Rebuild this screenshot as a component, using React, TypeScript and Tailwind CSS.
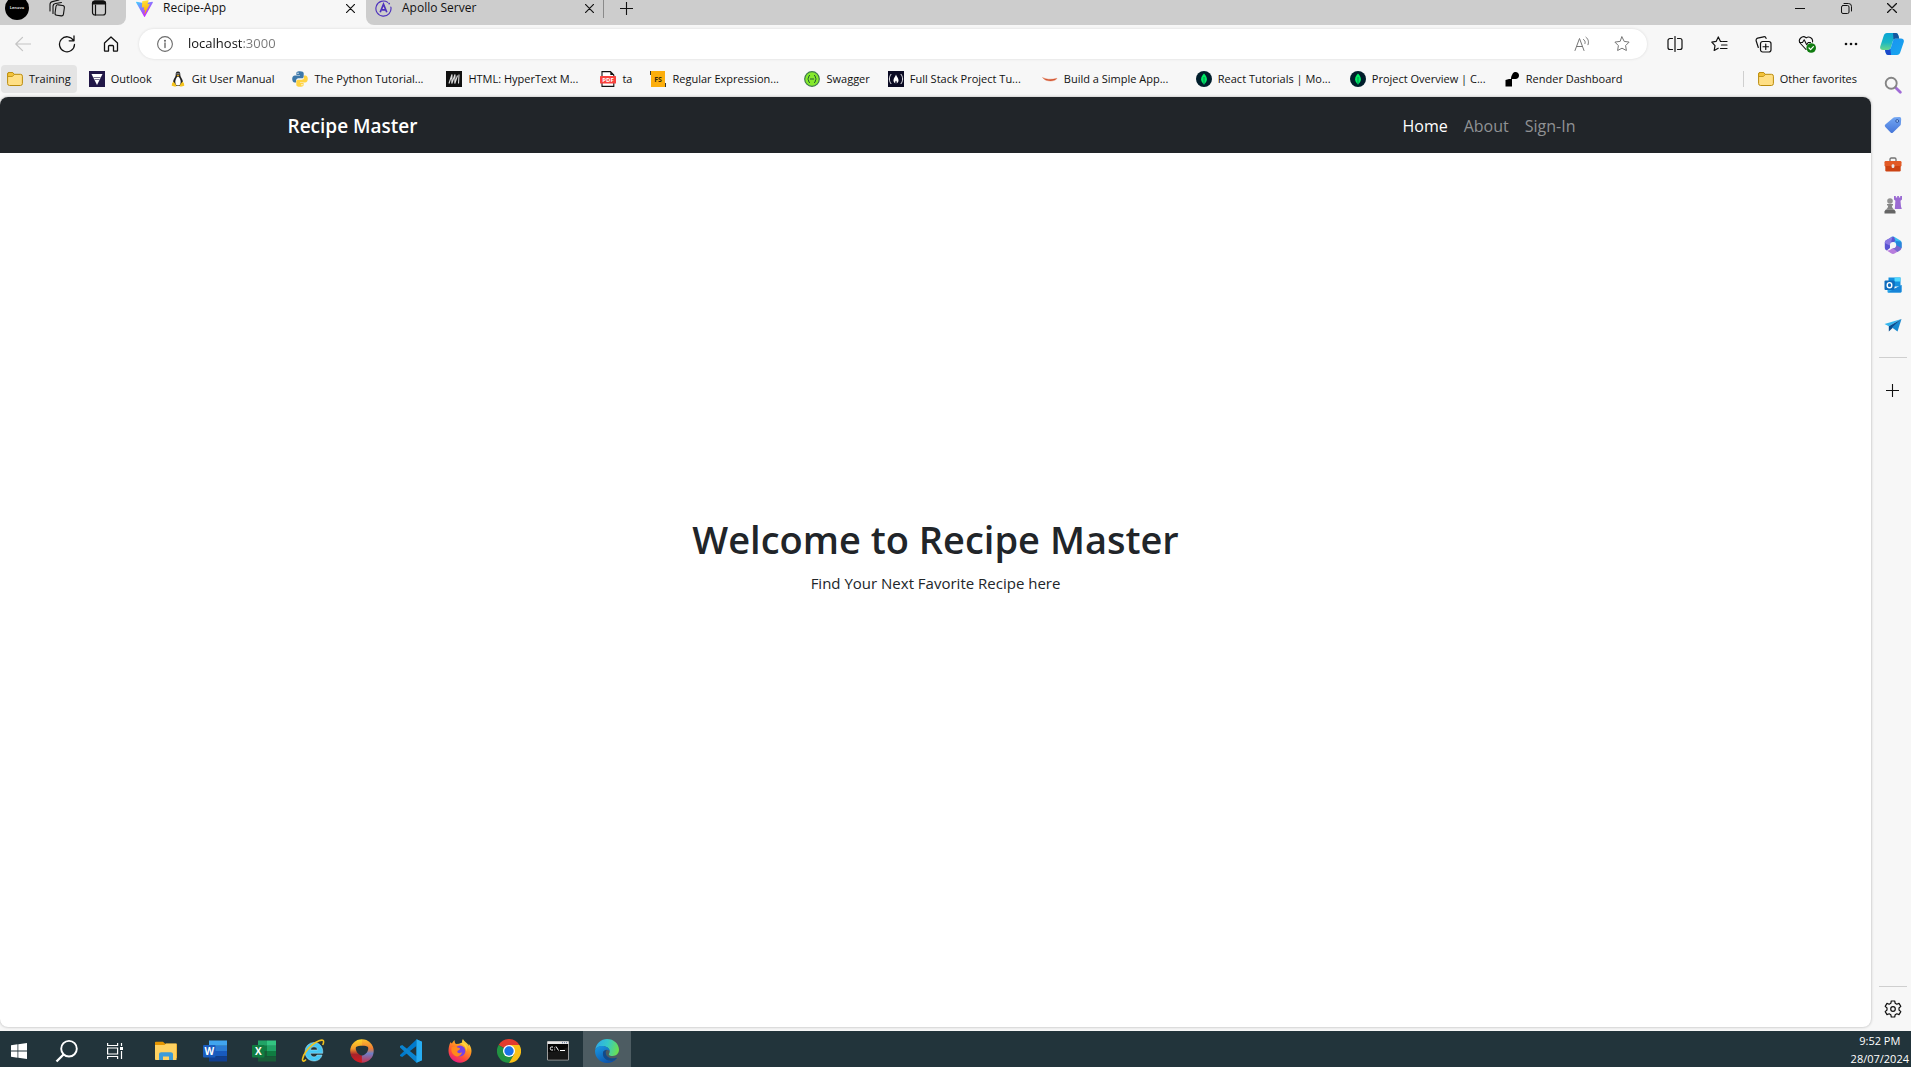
import React from "react";

type IconProps = { className?: string };
type Svg = (p: IconProps) => React.JSX.Element;

const line = {
  fill: "none",
  stroke: "currentColor",
  strokeLinecap: "round" as const,
  strokeLinejoin: "round" as const,
};

/* ---------- window and toolbar icons ---------- */

const Lenovo: Svg = () => (
  <svg viewBox="0 0 24 24" className="size-6">
    <circle cx="12" cy="12" r="12" fill="#000" />
    <text x="12" y="13" textAnchor="middle" fontSize="4" fontWeight="700" fill="#ddd" fontFamily="Open Sans, sans-serif">Lenovo</text>
  </svg>
);
const Workspaces: Svg = () => (
  <svg viewBox="0 0 18 18" className="size-[18px]" {...line} strokeWidth="1.100">
    <rect x="7.500" y="6" width="8.500" height="10.500" rx="2" transform="rotate(8 11 11)" />
    <path d="M5 14.500V7.500a3 3 0 0 1 2.500-3l6-1M2 12V5.500a3 3 0 0 1 2.300-2.900L11 1" />
  </svg>
);
const TabActions: Svg = () => (
  <svg viewBox="0 0 16 16" className="size-4" {...line} strokeWidth="1.200">
    <rect x="1.500" y="1" width="13" height="14" rx="2.500" />
    <path d="M1.500 3.500A2.500 2.500 0 0 1 4 1h8a2.500 2.500 0 0 1 2.500 2.500V4h-13z" fill="currentColor" />
    <path d="M4.500 5v10" />
  </svg>
);
const Vite: Svg = () => (
  <svg viewBox="0 0 256 257" className="size-[17px]">
    <defs>
      <linearGradient id="va" x1="0" y1="0" x2=".57" y2=".8"><stop stopColor="#41D1FF" /><stop offset="1" stopColor="#BD34FE" /></linearGradient>
      <linearGradient id="vb" x1=".43" y1=".02" x2=".5" y2=".9"><stop stopColor="#FFEA83" /><stop offset=".1" stopColor="#FFDD35" /><stop offset="1" stopColor="#FFA800" /></linearGradient>
    </defs>
    <path fill="url(#va)" d="M255 38 134 253c-2 4-9 5-11 0L1 38c-3-5 1-11 7-10l120 22 117-22c6-1 11 5 10 10z" />
    <path fill="url(#vb)" d="M185 0 97 17c-2 0-3 2-3 3l-5 92c0 2 2 4 5 3l24-5c2-1 5 1 4 4l-7 36c-1 2 1 5 4 4l15-5c2-1 5 2 4 4l-11 56c-1 4 4 5 6 3l74-147c1-3-1-5-4-5l-25 5c-3 0-5-2-4-4l17-57c0-2-2-5-6-4z" />
  </svg>
);
const Apollo: Svg = () => (
  <svg viewBox="0 0 18 18" className="size-[17px]" fill="none" stroke="#4b2fbd">
    <path d="M13.500 2.500A8 8 0 1 0 16.800 7.500" strokeWidth="1.200" strokeLinecap="round" />
    <circle cx="15" cy="3.800" r=".9" fill="#4b2fbd" stroke="none" />
    <path d="M5.500 13 9 4.500 12.500 13M7.500 10.500h3.500" strokeWidth="1.800" />
  </svg>
);
const Close: Svg = ({ className = "size-[9px]" }) => (
  <svg viewBox="0 0 10 10" className={className} {...line} strokeWidth="1.300"><path d="M.5.500l9 9M9.500.500l-9 9" /></svg>
);
const Plus: Svg = ({ className = "size-[13px]" }) => (
  <svg viewBox="0 0 13 13" className={className} {...line} strokeWidth="1.100"><path d="M6.500 0v13M0 6.500h13" /></svg>
);
const Minimize: Svg = () => <svg viewBox="0 0 10 10" className="size-[10px]" {...line}><path d="M0 5.500h10" /></svg>;
const Restore: Svg = () => (
  <svg viewBox="0 0 11 11" className="size-[11px]" {...line}>
    <rect x=".5" y="2.500" width="7.500" height="8" rx="1.500" />
    <path d="M3 .5h4.500a3 3 0 0 1 3 3V8" />
  </svg>
);
const Back: Svg = () => <svg viewBox="0 0 16 16" className="size-4 text-[#c4c4c4]" {...line} strokeWidth="1.200"><path d="M15.500 8H.8M7.500 1.300.8 8l6.700 6.700" /></svg>;
const Refresh: Svg = () => (
  <svg viewBox="0 0 18 18" className="size-[18px]" {...line} strokeWidth="1.300"><path d="M15.500 5.500A7.500 7.500 0 1 0 16.500 9.500M16 1v4.800h-4.800" /></svg>
);
const HomeIcon: Svg = () => (
  <svg viewBox="0 0 16 16" className="size-4" {...line} strokeWidth="1.300"><path d="M1.500 7 8 1l6.500 6v7.500a.6.600 0 0 1-.6.600H10.500v-4.600a1 1 0 0 0-1-1h-3a1 1 0 0 0-1 1v4.600H2.100a.6.600 0 0 1-.6-.6z" /></svg>
);
const Info: Svg = () => (
  <svg viewBox="0 0 16 16" className="size-4 shrink-0 text-[#6b6b6b]" {...line} strokeWidth="1.100"><circle cx="8" cy="8" r="7.400" /><path d="M8 7v4.500" strokeWidth="1.400" /><circle cx="8" cy="4.700" r=".5" fill="currentColor" /></svg>
);
const ReadAloud: Svg = () => (
  <svg viewBox="0 0 16 16" className="size-4 text-[#767676]" {...line}><path d="M1 14.500 5.500 2.500 10 14.500M2.600 10.500h5.800M9.500 3.500c1.500.8 2 2.500 1.500 4M12 1.200c2.500 2 3 4.800 2 7.500" /></svg>
);
const Star: Svg = () => (
  <svg viewBox="0 0 16 16" className="size-4 text-[#767676]" {...line}><path d="m8 .9 2.200 4.500 4.900.7-3.500 3.500.8 4.900L8 12.200l-4.400 2.300.8-4.900L.9 6.100l4.900-.7z" /></svg>
);
const Split: Svg = () => (
  <svg viewBox="0 0 16 16" className="size-4" {...line} strokeWidth="1.200"><path d="M8 .5v15M5.500 2.500H3a2 2 0 0 0-2 2v7a2 2 0 0 0 2 2h2.500M10.500 2.500H13a2 2 0 0 1 2 2v7a2 2 0 0 1-2 2h-2.500" /></svg>
);
const Favorites: Svg = () => (
  <svg viewBox="0 0 17 16" className="h-4 w-[17px]" {...line} strokeWidth="1.200"><path d="M11 5.500l-1.500-.1L7.300.9 5.100 5.400l-4.300.7 3.200 3.500-.8 4.900 4-2.300M12 5.500h4M10.500 9H16M9.500 12.500H16" /></svg>
);
const Collections: Svg = () => (
  <svg viewBox="0 0 17 17" className="size-[17px]" {...line} strokeWidth="1.200">
    <rect x="5.500" y="5.500" width="10.500" height="10.500" rx="2.200" />
    <path d="M10.750 8v5.500M8 10.750h5.500M3.300 11.500 1.200 5A2.200 2.200 0 0 1 2.700 2.200L8.500.8a2.200 2.200 0 0 1 2.600 1.600" />
  </svg>
);
const HeartPulse: Svg = () => (
  <svg viewBox="0 0 18 18" className="size-[18px]" {...line} strokeWidth="1.100">
    <path d="m8 14.500-5.500-6a4 4 0 0 1 5.700-5.600A4 4 0 0 1 14.500 7M1.500 7.500h3l1.700-2.700 2.500 5 1.500-2.300h2.300" />
    <circle cx="13.200" cy="13" r="4.800" fill="#107c10" stroke="none" />
    <path d="m11 13 1.600 1.600 2.800-3" stroke="#fff" strokeWidth="1.200" />
  </svg>
);
const Dots: Svg = () => <svg viewBox="0 0 14 4" className="h-1 w-[14px]" fill="currentColor"><circle cx="2" cy="2" r="1.300" /><circle cx="7" cy="2" r="1.300" /><circle cx="12" cy="2" r="1.300" /></svg>;
const Copilot: Svg = () => (
  <svg viewBox="0 0 24 24" className="size-6">
    <defs>
      <linearGradient id="ca" x1="0" y1="0" x2="0" y2="1"><stop stopColor="#0aa5d5" /><stop offset=".55" stopColor="#1bb7c4" /><stop offset="1" stopColor="#69d68c" /></linearGradient>
      <linearGradient id="cb" x1="0" y1="0" x2="1" y2="1"><stop stopColor="#1b8ff2" /><stop offset="1" stopColor="#16a8ee" /></linearGradient>
    </defs>
    <path d="M7 1h8.500c2 0 2.500 1.300 3 3l.7 2.500H16c-1.800 0-2.600 1-3.100 2.600l-2 6.500C10.400 17.300 9.500 18 8 18H3c-2.500 0-3.300-1.600-2.700-3.700L3.800 3.500C4.300 2 5.300 1 7 1z" fill="url(#ca)" />
    <path d="M17 23H8.500c-2 0-2.500-1.300-3-3L5 18h3c1.500 0 2.400-.7 2.900-2.400l2-6.500c.5-1.600 1.300-2.600 3.100-2.600h5c2.500 0 3.300 1.600 2.700 3.700l-3.500 10.300C19.700 22 18.700 23 17 23z" fill="url(#cb)" />
    <path d="M13 1h2.500c2 0 2.500 1.300 3 3l.7 2.500H16c-1.200 0-2 .5-2.500 1.300z" fill="#15579f" />
    <path d="M11 23H8.500c-2 0-2.500-1.300-3-3L5 18h3c1 0 1.800-.4 2.300-1.200z" fill="#1b48c9" />
  </svg>
);

/* ---------- bookmark icons ---------- */

const small = "size-4 shrink-0";

const Folder: Svg = () => (
  <svg viewBox="0 0 16 16" className={small}><path d="M.6 4V3A1.500 1.500 0 0 1 2.100 1.500h3.400L7.500 3.300h6A1.900 1.900 0 0 1 15.400 5.200v7.300a2 2 0 0 1-2 2H2.600a2 2 0 0 1-2-2z" fill="#ffdf85" stroke="#ba8b0c" /><path d="M.6 5.500h4.600l2.300-2L5.500 1.500H2.100A1.500 1.500 0 0 0 .6 3z" fill="#f2c23c" stroke="#ba8b0c" strokeWidth=".8" /></svg>
);
const Vanguard: Svg = () => (
  <svg viewBox="0 0 16 16" className={small}><path d="M0 0h16v16H0z" fill="#211747" /><path d="M2.500 3h11L8 14z" fill="#fff" /><path d="M4.500 6.500h7M5.500 8.500h5" stroke="#211747" strokeWidth=".6" /></svg>
);
const Tux: Svg = () => (
  <svg viewBox="0 0 16 16" className={small}>
    <path d="M8 .5C6 .5 5.600 2 5.700 4c.1 1.800-2 3.500-2.500 6-.3 2 .3 4 2 5h5.600c1.700-1 2.300-3 2-5-.5-2.500-2.600-4.200-2.500-6C10.400 2 10 .5 8 .5z" fill="#222" />
    <path d="M8 5.500c-1 0-2.700 3-2.700 5.500S6.500 14.500 8 14.500s2.700-1 2.700-3.500S9 5.500 8 5.500z" fill="#fff" />
    <path d="M6.500 3.900h3L8 5.400z" fill="#f5b70c" /><path d="m3.500 10.500 3 4c.2 1-1 1.300-2 1l-2.800-.8.400-2.500zM12.500 10.500l-3 4c-.2 1 1 1.300 2 1l2.800-.8-.4-2.500z" fill="#f5c31c" />
    <circle cx="7.100" cy="2.800" r=".6" fill="#fff" /><circle cx="8.900" cy="2.800" r=".6" fill="#fff" />
  </svg>
);
const Python: Svg = () => (
  <svg viewBox="0 0 16 16" className={small}>
    <path d="M7.900.2C4.500.2 4.400 1.600 4.400 2.200V4H8v.6H3C1.200 4.600.2 6 .2 8s1 3.400 2.500 3.400h1.400V9.600c0-1.300 1-2.300 2.300-2.300h3.500c1 0 1.800-.8 1.800-1.800V2.300C11.700.9 10.500.2 7.900.2z" fill="#3d78aa" />
    <path d="M8.100 15.800c3.400 0 3.500-1.400 3.500-2V12H8v-.6h5c1.800 0 2.800-1.400 2.800-3.400s-1-3.400-2.500-3.400h-1.400v1.800c0 1.300-1 2.300-2.300 2.300H6.100c-1 0-1.800.8-1.800 1.800v3.200c0 1.400 1.200 2.100 3.800 2.100z" fill="#ffd342" />
    <circle cx="6" cy="2.200" r=".7" fill="#fff" /><circle cx="10" cy="13.800" r=".7" fill="#fff" />
  </svg>
);
const Mdn: Svg = () => <svg viewBox="0 0 16 16" className={small}><path d="M0 0h16v16H0z" fill="#111" /><path d="m3 12.500 3-9-.2 9 3.200-9-.2 9 2.700-8M13 3.500l-.5 9" fill="none" stroke="#ddd" strokeWidth="1.100" /></svg>;
const Pdf: Svg = () => (
  <svg viewBox="0 0 16 16" className={small}><path d="M2 .6h8.500L13.800 4v11.400H2z" fill="#fff" stroke="#111" strokeWidth="1.100" /><path d="M10.300.6V4h3.500z" fill="#111" /><rect y="5" width="16" height="7.500" rx=".6" fill="#f8413c" /><text x="8" y="11" textAnchor="middle" fontSize="6" fontWeight="700" fill="#fff" fontFamily="Open Sans, sans-serif">PDF</text></svg>
);
const FullStackBadge: Svg = () => (
  <svg viewBox="0 0 16 16" className={small}><path d="M1 0h14v12h1v4H1V4H0V0z" fill="#fcae0c" /><path d="M.5 0v4M15.500 12v4" stroke="#333" /><text x="8" y="11" textAnchor="middle" fontSize="7" fontWeight="700" fill="#3b2a08" fontFamily="Open Sans, sans-serif">FS</text></svg>
);
const SwaggerIcon: Svg = () => (
  <svg viewBox="0 0 16 16" className={small}><circle cx="8" cy="8" r="7.300" fill="#85ea2d" stroke="#3f7c4c" strokeWidth="1.200" /><path d="M6 4.300c-2 0-.8 3.200-2.400 3.700C5.200 8.500 4 11.700 6 11.700M10 4.300c2 0 .8 3.200 2.400 3.700-1.600.5-.4 3.700-2.400 3.700M6 8h4" fill="none" stroke="#245b35" /></svg>
);
const FreeCodeCamp: Svg = () => (
  <svg viewBox="0 0 16 16" className={small}><path d="M0 0h16v16H0z" fill="#0a0a23" /><path d="M3.200 3C.8 6 .8 10 3.200 13M12.800 3c2.400 3 2.400 7 0 10" fill="none" stroke="#fff" strokeWidth=".9" /><path d="M8 3.500c.5 2 2.500 3.500 2.500 5.800 0 1.700-1 2.700-1.800 3.200.3-1.500-.2-2.500-.7-3-.5.500-1 1.500-.7 3-.8-.5-1.800-1.500-1.800-3.200C5.500 7 7.500 5.500 8 3.500z" fill="#fff" /></svg>
);
const Swoosh: Svg = () => <svg viewBox="0 0 16 16" className={small}><path d="M.5 6.500c3 1.800 9 2.500 14.500.8-2 3.700-11.500 3.700-14.500-.8z" fill="#cf4520" stroke="#e58c6a" strokeWidth=".5" /></svg>;
const Mongo: Svg = () => <svg viewBox="0 0 16 16" className={small}><circle cx="8" cy="8" r="8" fill="#001e2b" /><path d="M8 2.500c2 2 2.900 3.800 2.900 5.700S9.800 11.800 8 13.500C6.200 11.800 5.100 10.100 5.100 8.200S6 4.500 8 2.500z" fill="#00ed64" /><path d="M8 6v8" stroke="#00684a" strokeWidth=".7" /></svg>;
const RenderIcon: Svg = () => <svg viewBox="0 0 16 16" className={small}><path d="M8.500 3C9 1.500 10.500 1 11.500 1 13.500 1 15 2.500 15 4.500S13.500 8 11.500 8H8v7.500H1.500V9L5 8h2c0-2 .5-3.500 1.500-5z" fill="#000" /></svg>;

/* ---------- sidebar icons ---------- */

const SearchSide: Svg = () => (
  <svg viewBox="0 0 18 18" className="size-[18px]" fill="none" strokeLinecap="round"><path d="m11.500 11.500 4.800 4.800" stroke="#a06bd6" strokeWidth="2.800" /><circle cx="7.200" cy="7.200" r="5.500" stroke="#858585" strokeWidth="1.900" /></svg>
);
const Tag: Svg = () => (
  <svg viewBox="0 0 18 18" className="size-[18px]"><defs><linearGradient id="tg" x1="0" y1="0" x2="0" y2="1"><stop stopColor="#73a7f3" /><stop offset="1" stopColor="#4676d9" /></linearGradient></defs><path d="M10.500 1.300 15.300 1a1.800 1.800 0 0 1 1.900 1.900l-.4 5.300c0 .5-.3 1-.6 1.300L9 16.400a1.700 1.700 0 0 1-2.400 0L1.300 11a1.700 1.700 0 0 1 0-2.400l8-6.800c.3-.3.700-.5 1.200-.5z" fill="url(#tg)" /><circle cx="13.200" cy="5" r="1.400" fill="#a9d0ff" stroke="#244a96" strokeWidth=".9" /></svg>
);
const Toolbox: Svg = () => (
  <svg viewBox="0 0 18 18" className="size-[18px]"><path d="M6 5V3.300C6 2.500 6.500 2 7.200 2h3.600c.7 0 1.200.5 1.200 1.300V5" fill="none" stroke="#747474" strokeWidth="1.300" /><rect x=".5" y="5" width="17" height="5.500" rx="1.200" fill="#e25a26" /><path d="M1.300 10h15.400v4.300a1.200 1.200 0 0 1-1.200 1.200h-13a1.200 1.200 0 0 1-1.200-1.200z" fill="#cc4313" /><rect x="7.600" y="8.300" width="2.800" height="3.700" rx="1.300" fill="#e9e9e9" /></svg>
);
const Chess: Svg = () => (
  <svg viewBox="0 0 18 18" className="size-[18px]"><path d="M10 0h1.800v1.500h1.400V0h1.700v1.500h1.300V0H18v3.500l-1.500 1.200.5 5.800.8 2.500h-7l.6-8.300L10 3.500z" fill="#9b6bd3" /><circle cx="6" cy="5" r="2.800" fill="#929292" /><path d="M3 8h6v1.600H7.800c0 2 1.200 3 2.200 4.200H2c1-1.200 2.200-2.200 2.200-4.200H3z" fill="#858585" /><path d="M1.500 13.800h9l1 1.700v2H.5v-2z" fill="#656565" /></svg>
);
const M365: Svg = () => (
  <svg viewBox="0 0 18 18" className="size-[18px]">
    <path d="M6.500 1.500C7.500.500 9 .3 10.500 1L16 4.200c1 .6 1.500 1.400 1.500 2.600V12l-2 .5L11 7.500 5.500 6z" fill="#38bdf0" />
    <path d="M8.500.7 2.500 4C1.300 4.700.8 5.600.8 7v4.500c0 1.500.8 2.700 2 3L6 12V8.500L11.500 5 10 1z" fill="#5a55d2" />
    <path d="M8.500.7 2.500 4C1.300 4.700.8 5.600.8 7l5 2.500L7 6.500z" fill="#8c7ae2" />
    <path d="M2 14c1.500 1 3 .5 4.500-.5l2-1.300 4.500-.2 2.500 2.500-4.500 2.800c-1.300.8-2.700.8-4 0z" fill="#b77ddd" />
    <path d="m12 8 5.500-1.500v5c0 1.400-.6 2.300-1.700 3L13.500 16 9 12.300c1.800-.5 3-2 3-4.300z" fill="#7a68cf" />
    <path d="m11.500 5 5.500.5.500 1.500v5L12 9z" fill="#2589dc" />
    <circle cx="9.100" cy="9" r="3.100" fill="#f7f7f7" />
  </svg>
);
const OutlookSide: Svg = () => (
  <svg viewBox="0 0 18 18" className="size-[18px]"><path d="M4.500 1.500h12v9h-12z" fill="#1490df" /><path d="M10.500 1.500h6v4h-6z" fill="#50d9ff" /><path d="M4.500 5.500h6v5h-6z" fill="#0364b8" /><path d="M3.500 16V9l7 4 7-4v6.500a1 1 0 0 1-1 1H4z" fill="#28a8ea" /><path d="m17.500 9-14 7.500h13a1 1 0 0 0 1-1z" fill="#1784d8" /><rect x=".5" y="4.500" width="10" height="9.500" rx="1" fill="#0f6cbd" /><ellipse cx="5.500" cy="9.200" rx="2.300" ry="2.600" fill="none" stroke="#fff" strokeWidth="1.400" /></svg>
);
const Plane: Svg = () => (
  <svg viewBox="0 0 18 18" className="size-[18px]"><path d="M17.500 3 .5 8l4.300 2.300z" fill="#35b6ee" /><path d="m17.500 3-12.700 7.300v5.200L8 12.500z" fill="#0b4f91" /><path d="M17.500 3 8 11.500l5.500 4z" fill="#1688cf" /></svg>
);
const Gear: Svg = () => (
  <svg viewBox="0 0 18 18" className="size-[18px]" {...line} strokeWidth="1.200"><path d="M7.300 1h3.400l.5 2.300 1.600.9 2.200-.8 1.800 3-1.800 1.600v2l1.800 1.600-1.800 3-2.200-.8-1.600.9-.5 2.300H7.300l-.5-2.300-1.600-.9-2.200.8-1.800-3L3 10V8L1.200 6.400 3 3.400l2.200.8 1.600-.9z" /><circle cx="9" cy="9" r="2.300" /></svg>
);

/* ---------- taskbar icons ---------- */

const Windows: Svg = () => <svg viewBox="0 0 16 16" className="size-4" fill="#fff"><path d="M0 2.200 6.500 1.300v6.300H0zM7.300 1.200 16 0v7.600H7.300zM0 8.400h6.500v6.300L0 13.800zM7.300 8.400H16V16l-8.700-1.200z" /></svg>;
const SearchTask: Svg = () => <svg viewBox="0 0 24 24" className="size-6" fill="none" stroke="#fff"><circle cx="14" cy="9.700" r="7.800" strokeWidth="1.900" /><path d="m8.500 15.500-7 7" strokeWidth="2.300" /></svg>;
const TaskView: Svg = () => <svg viewBox="0 0 18 18" className="size-[18px]" fill="none" stroke="#fff" strokeWidth="1.200"><path d="M1.600 1v2.500h10V1M1.600 17v-2.500h10V17M1.600 6h10v6h-10zM15.500 1v3M15.500 9v8" /><path d="M14 5h3v3h-3z" fill="#fff" stroke="none" /></svg>;
const Explorer: Svg = () => (
  <svg viewBox="0 0 24 24" className="size-6"><path d="M1 3.500A.8.800 0 0 1 1.800 2.700H9l2.200 2H22c.6 0 1 .4 1 1v13.600H1z" fill="#e59500" /><path d="M1 6h9.500L12 4.500h10.500V21H1.800a.8.800 0 0 1-.8-.8z" fill="#ffd161" /><path d="M5 21v-5.500c0-1.400.8-2.300 2.200-2.300h9.600c1.400 0 2.200.9 2.200 2.300V21h-4v-3.500H9V21z" fill="#3c9bd9" /></svg>
);
const Word: Svg = () => (
  <svg viewBox="0 0 24 24" className="size-6"><path d="M6 1.500h18v5.300H6z" fill="#41a5ee" /><path d="M6 6.800h18V12H6z" fill="#2b7cd3" /><path d="M6 12h18v5.300H6z" fill="#185abd" /><path d="M6 17.300h18v5.200H6z" fill="#103f91" /><rect y="6" width="12.500" height="12.500" rx="1" fill="#1a5dbe" /><text x="6.250" y="16" textAnchor="middle" fontSize="10" fontWeight="700" fill="#fff" fontFamily="Open Sans, sans-serif">W</text></svg>
);
const Excel: Svg = () => (
  <svg viewBox="0 0 24 24" className="size-6"><path d="M6 1.500h9v5.300H6z" fill="#21a366" /><path d="M15 1.500h9v5.300h-9z" fill="#33c481" /><path d="M6 6.800h9V12H6z" fill="#107c41" /><path d="M15 6.800h9V12h-9z" fill="#21a366" /><path d="M6 12h9v5.300H6z" fill="#185c37" /><path d="M15 12h9v5.300h-9z" fill="#107c41" /><path d="M6 17.300h18v5.200H6z" fill="#185c37" /><rect y="6" width="12.500" height="12.500" rx="1" fill="#107c41" /><text x="6.250" y="16" textAnchor="middle" fontSize="10" fontWeight="700" fill="#fff" fontFamily="Open Sans, sans-serif">X</text></svg>
);
const Explorer11: Svg = () => (
  <svg viewBox="0 0 24 24" className="size-6"><path d="M13 3.500a9 9 0 0 0-9 9.200c0 5.300 3.800 9.300 9 9.300 4 0 7-2.200 8-6h-5c-.6 1.200-1.600 1.900-3 1.900-2 0-3.500-1.300-3.600-3.600h12.300C22.300 7.800 18.500 3.500 13 3.500zM9.500 11c.3-2 1.600-3.200 3.500-3.200s3.200 1.200 3.500 3.200z" fill="#45c8f5" stroke="#b7ecff" strokeWidth=".5" /><path d="M5 20.500c-2.500 2.700-4 1.800-3.300-1C2.500 16 6 10.500 11 6.200 16 2 21 .2 22.200 1.600c.7.900.4 2.500-.5 4.400" fill="none" stroke="#f3c21d" strokeWidth="1.600" /></svg>
);
const Ring: Svg = () => (
  <svg viewBox="0 0 24 24" className="size-6">
    <defs>
      <linearGradient id="ra" x1="0" y1="0" x2="0" y2="1"><stop stopColor="#ffd92a" /><stop offset=".4" stopColor="#f39a2b" /><stop offset=".65" stopColor="#a8232b" /><stop offset="1" stopColor="#d81920" /></linearGradient>
      <linearGradient id="rb" x1="0" y1="0" x2="0" y2="1"><stop stopColor="#ffc32b" /><stop offset=".4" stopColor="#ee7b35" /><stop offset=".6" stopColor="#6d7fc8" /><stop offset="1" stopColor="#c9304a" /></linearGradient>
    </defs>
    <path d="M12 .2a11.800 11.800 0 0 0 0 23.600z" fill="url(#ra)" />
    <path d="M11.900.2a11.800 11.800 0 0 1 0 23.600z" fill="url(#rb)" />
    <path d="M6 8c2-1.500 10-2 12 0 1.200 3-2.200 8.500-6 8.500S4.800 11 6 8z" fill="#22343b" />
  </svg>
);
const VsCode: Svg = () => (
  <svg viewBox="0 0 24 24" className="size-6"><path d="M17.500.4v6.700L3.200 18 1 17v-1L17.500.4z" fill="#007acc" /><path d="M1 7v1.500l16.500 15.300 5.500-2.500V2.700L17.500.3v17L3.200 6z" fill="#0b84d0" /><path d="m17.500.3 5.500 2.400v18.600l-5.500 2.500z" fill="#27adf2" /></svg>
);
const Firefox: Svg = () => (
  <svg viewBox="0 0 24 24" className="size-6">
    <defs><linearGradient id="ff" x1=".8" y1="0" x2=".25" y2="1"><stop stopColor="#fff44f" /><stop offset=".35" stopColor="#ff9a1f" /><stop offset=".7" stopColor="#ff4a3d" /><stop offset="1" stopColor="#e3168b" /></linearGradient></defs>
    <path d="M15 0c-1 1.500-1.300 2.800-.6 4.500L8 5C6.800 4 6.500 2.800 6.700 1.300 5.400 2 4.500 3.200 4 4.500L2.400 3.200C1 6 .5 9.500.5 12 .5 18.500 5.700 23.700 12 23.700S23.500 18.500 23.500 12c0-3.300-1.500-6-3-7.300.3 1 .3 1.700.2 2.300C19.500 3.500 16 3 15 0z" fill="url(#ff)" />
    <circle cx="12" cy="12" r="5.400" fill="#7542e5" /><path d="M3.500 8.500C6 7 8 7.500 9.500 8.500c1.500.3 3 .5 2.500 1.700-.5 1-2.500 1-2.700 2.300-.2 1.800 3.200 2.300 4.700.5-.5 4-4.500 5.500-7.500 3.500S3 11.500 3.500 8.500z" fill="#ff8a1c" /><path d="M11 4.500c4 0 7.500 3.500 7 8 2-4 .5-8-3.600-9z" fill="#ffd43a" />
  </svg>
);
const Chrome: Svg = () => (
  <svg viewBox="0 0 24 24" className="size-6"><path d="M12 12 1.600 6a12 12 0 0 1 20.800 0z" fill="#e33b2e" /><path d="M12 12 1.600 6A12 12 0 0 0 12 24l5.200-9z" fill="#229342" /><path d="M12 6h10.400A12 12 0 0 1 12 24l5.200-9z" fill="#fbc116" /><circle cx="12" cy="12" r="6" fill="#fff" /><circle cx="12" cy="12" r="4.700" fill="#1a73e8" /></svg>
);
const Terminal: Svg = () => (
  <svg viewBox="0 0 24 24" className="size-6"><path d="M1.500 2.500h21v18.500h-21z" fill="#050505" stroke="#9b9b9b" /><path d="M1.500 2.500h21V5h-21z" fill="#e6e6e6" /><path d="M16 3.700h5.500" stroke="#596f96" strokeDasharray="1 1" /><path d="M2 13c6 0 13-1 20-5v12.500H2z" fill="#222" opacity=".6" /><path d="M7 8H5.500C4.500 8 4.300 8.500 4.300 9.500s.2 1.500 1.200 1.500H7M8.700 8.500v.8M8.700 10.500v.8M10 7.500l2.500 4M14 11.500h5" fill="none" stroke="#fff" /></svg>
);
const Edge: Svg = () => (
  <svg viewBox="0 0 24 24" className="size-6">
    <defs>
      <linearGradient id="ea" x1="0" y1=".3" x2="1" y2=".5"><stop stopColor="#2ca8ea" /><stop offset=".5" stopColor="#35c9c8" /><stop offset="1" stopColor="#6be04f" /></linearGradient>
      <linearGradient id="eb" x1="0" y1="0" x2=".7" y2="1"><stop stopColor="#1a9be4" /><stop offset="1" stopColor="#0b4fa8" /></linearGradient>
    </defs>
    <path d="M.3 10.500C1.200 4.500 6.100 0 12 0c7 0 12 5 12 10.800 0 3.700-2.900 6.200-6.200 6.200-2.700 0-4-.9-4-1.800 0-.5.900-1.200.9-2.800C14.700 9.500 11.500 7 7.500 7 4 7 1.500 8.500.3 10.500z" fill="url(#ea)" />
    <path d="M.1 11.500C.6 8.800 3.500 7 7.200 7c4.500 0 7.500 2.500 7.500 5.200 0 0-1.300-1.700-3.400-1.400-5 .8-4.300 9.200 3 10.700 2.500.5 5-.3 6.800-1.500C19 22.500 15.700 24 12 24 5 24-.5 18 .1 11.500z" fill="url(#eb)" />
    <path d="M8.300 12.500c-1.500 4.500 1.700 8.300 5.700 9.100 3.200.6 5.800-.6 7.700-2.200.4-.3 0-.9-.5-.7-5 1.800-10.500-.5-10.500-5.200 0-1.200.6-2.100 1.200-2.600-1.700 0-3 .5-3.600 1.600z" fill="#114a8b" />
  </svg>
);

/* ---------- data ---------- */

const bookmarks: { label: string; Icon: Svg; active?: boolean; wide?: boolean }[] = [
  { label: "Training", Icon: Folder, active: true },
  { label: "Outlook", Icon: Vanguard },
  { label: "Git User Manual", Icon: Tux },
  { label: "The Python Tutorial...", Icon: Python, wide: true },
  { label: "HTML: HyperText M...", Icon: Mdn, wide: true },
  { label: "ta", Icon: Pdf },
  { label: "Regular Expression...", Icon: FullStackBadge, wide: true },
  { label: "Swagger", Icon: SwaggerIcon },
  { label: "Full Stack Project Tu...", Icon: FreeCodeCamp, wide: true },
  { label: "Build a Simple App...", Icon: Swoosh, wide: true },
  { label: "React Tutorials | Mo...", Icon: Mongo, wide: true },
  { label: "Project Overview | C...", Icon: Mongo, wide: true },
  { label: "Render Dashboard", Icon: RenderIcon },
];

const tools: [string, Svg][] = [
  ["Split screen", Split], ["Favorites", Favorites], ["Collections", Collections],
  ["Browser essentials", HeartPulse], ["Settings and more", Dots],
];

const sideApps: [string, Svg][] = [
  ["Search", SearchSide], ["Shopping", Tag], ["Tools", Toolbox], ["Games", Chess],
  ["Microsoft 365", M365], ["Outlook", OutlookSide], ["Drop", Plane],
];

const taskApps: [string, Svg][] = [
  ["File Explorer", Explorer], ["Word", Word], ["Excel", Excel], ["Internet Explorer", Explorer11],
  ["Security browser", Ring], ["Visual Studio Code", VsCode], ["Firefox", Firefox],
  ["Chrome", Chrome], ["Command Prompt", Terminal], ["Edge", Edge],
];

const btn = "flex shrink-0 items-center justify-center";

/* ---------- page parts ---------- */

function TabStrip() {
  return (
    <div className="flex h-[25px] shrink-0 overflow-hidden bg-[#f7f7f7]">
      <div className="flex w-[126px] shrink-0 rounded-br-lg bg-[#cdcdcd] pb-[9px] pl-[5px]">
        <button aria-label="Profile" className={`${btn} w-6`}><Lenovo /></button>
        <button aria-label="Workspaces" className={`${btn} ml-[19px] w-[18px]`}><Workspaces /></button>
        <button aria-label="Tab actions" className={`${btn} ml-[25px] w-4`}><TabActions /></button>
      </div>
      <div className="flex w-[240px] shrink-0 items-center px-2.5 pb-[9px]">
        <Vite />
        <span className="ml-2.5 flex-1">Recipe-App</span>
        <button aria-label="Close Recipe-App" className={`${btn} size-3`}><Close /></button>
      </div>
      <div className="flex flex-1 items-center rounded-bl-lg bg-[#cdcdcd] pb-[9px] pl-[9px]">
        <div className="flex w-[220px] items-center">
          <Apollo />
          <span className="ml-2.5 flex-1">Apollo Server</span>
          <button aria-label="Close Apollo Server" className={`${btn} size-3`}><Close /></button>
        </div>
        <span className="ml-2 h-5 w-px bg-[#8a8a8a]" />
        <button aria-label="New tab" className={`${btn} ml-4 size-[13px]`}><Plus /></button>
        <div className="ml-auto flex gap-2.5 pr-px">
          <button aria-label="Minimize" className={`${btn} w-9`}><Minimize /></button>
          <button aria-label="Restore" className={`${btn} w-9`}><Restore /></button>
          <button aria-label="Close" className={`${btn} w-9`}><Close className="size-[10px]" /></button>
        </div>
      </div>
    </div>
  );
}

function Toolbar() {
  return (
    <div className="flex h-[38px] shrink-0 items-center pl-px">
      <button aria-label="Back" className={`${btn} w-11`}><Back /></button>
      <button aria-label="Refresh" className={`${btn} w-11`}><Refresh /></button>
      <button aria-label="Home" className={`${btn} w-11`}><HomeIcon /></button>
      <div className="ml-1.5 flex h-[30px] flex-1 items-center rounded-full bg-white pl-[18px] pr-[17px] shadow-[0_0_3px_rgba(0,0,0,0.12)]">
        <Info />
        <input
          aria-label="Address"
          defaultValue="localhost:3000"
          className="ml-[15px] flex-1 bg-[linear-gradient(to_right,#111_54px,#777_54px)] bg-clip-text text-[13px] text-transparent outline-none"
        />
        <button aria-label="Read aloud" className={`${btn} w-6`}><ReadAloud /></button>
        <button aria-label="Add to favorites" className={`${btn} ml-5 w-4`}><Star /></button>
      </div>
      <div className="flex pl-1.5">
        {tools.map(([name, Icon]) => (
          <button key={name} aria-label={name} className={`${btn} h-8 w-11`}><Icon /></button>
        ))}
      </div>
      <button aria-label="Copilot" className={`${btn} w-[38px]`}><Copilot /></button>
    </div>
  );
}

function Bookmarks() {
  return (
    <nav aria-label="Bookmarks" className="flex h-[34px] shrink-0 items-center pb-0.5 pl-px pr-2 text-[11px]">
      {bookmarks.map(({ label, Icon, active, wide }) => (
        <a
          key={label}
          href="#"
          className={`mr-1.5 flex h-7 shrink-0 items-center gap-1.5 whitespace-nowrap rounded px-1.5 ${active ? "bg-[#e4e4e4]" : ""} ${wide ? "w-[148px]" : ""}`}
        >
          <Icon />
          {label}
        </a>
      ))}
      <span className="ml-auto h-4 w-px bg-[#cfcfcf]" />
      <a href="#" className="ml-2 flex h-7 items-center gap-1.5 whitespace-nowrap px-1.5"><Folder />Other favorites</a>
    </nav>
  );
}

function RecipePage() {
  return (
    <div className="flex flex-1 flex-col overflow-hidden rounded-lg bg-white text-base text-[#212529] shadow-[0_0_3px_rgba(0,0,0,0.3)]">
      <header className="h-14 shrink-0 bg-[#212529]">
        <div className="mx-auto flex h-full max-w-[1320px] items-center justify-between px-3 pt-0.5">
          <a href="#" className="text-[19px] font-semibold text-white">Recipe Master</a>
          <nav className="flex">
            <a href="#" className="px-2 text-white">Home</a>
            <a href="#" className="px-2 text-[#909294]">About</a>
            <a href="#" className="px-2 text-[#909294]">Sign-In</a>
          </nav>
        </div>
      </header>
      <main className="flex flex-1 flex-col items-center justify-center pb-[70px]">
        <h1 className="mb-2 text-[38px] font-semibold leading-[48px]">Welcome to Recipe Master</h1>
        <p className="text-[15px] leading-6">Find Your Next Favorite Recipe here</p>
      </main>
    </div>
  );
}

function Sidebar() {
  return (
    <aside className="flex w-10 shrink-0 flex-col items-center pl-[3px] pt-0.5">
      {sideApps.map(([name, Icon]) => (
        <button key={name} aria-label={name} className={`${btn} h-10 w-full`}><Icon /></button>
      ))}
      <hr className="mt-3 w-7 border-[#cfcfcf]" />
      <button aria-label="Customize" className={`${btn} mt-5 h-6 w-full`}><Plus /></button>
      <hr className="mt-auto w-7 border-[#cfcfcf]" />
      <button aria-label="Settings" className={`${btn} h-11 w-full`}><Gear /></button>
    </aside>
  );
}

function Taskbar() {
  return (
    <footer className="flex h-9 shrink-0 items-stretch bg-[#22343b] text-white">
      <button aria-label="Start" className={`${btn} w-[43px] pr-1.5 pt-1`}><Windows /></button>
      <button aria-label="Search" className={`${btn} w-12 pt-1`}><SearchTask /></button>
      <button aria-label="Task View" className={`${btn} w-12 pt-1`}><TaskView /></button>
      <div className="ml-[3px] flex gap-px">
        {taskApps.map(([name, Icon]) => (
          <button key={name} aria-label={name} className={`${btn} w-12 pt-1 ${name === "Edge" ? "bg-[#4d5c62]" : ""}`}><Icon /></button>
        ))}
      </div>
      <div className="ml-auto mr-0.5 flex flex-col items-center pt-px text-[11px] leading-[18px]">
        <span>9:52 PM</span>
        <span>28/07/2024</span>
      </div>
    </footer>
  );
}

export default function App() {
  return (
    <div className="flex h-screen flex-col overflow-hidden bg-[#f7f7f7] font-['Open_Sans','Noto_Sans',sans-serif] text-[12px] text-[#111]">
      <TabStrip />
      <Toolbar />
      <div className="flex min-h-0 flex-1">
        <div className="flex min-w-0 flex-1 flex-col pb-1">
          <Bookmarks />
          <RecipePage />
        </div>
        <Sidebar />
      </div>
      <Taskbar />
    </div>
  );
}
